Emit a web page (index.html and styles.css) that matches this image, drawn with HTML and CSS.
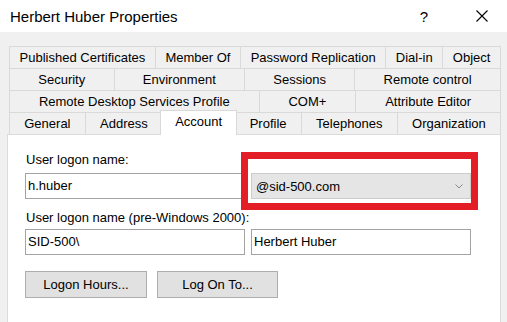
FILE: index.html
```html
<!DOCTYPE html>
<html lang="en">
  <head>
    <meta charset="UTF-8" />
    <meta name="viewport" content="width=device-width, initial-scale=1.0" />
    <title>Herbert Huber Properties</title>
    <link rel="stylesheet" href="styles.css">
  </head>
  <body>
    <div class="titlebar">
      <span class="title">Herbert Huber Properties</span>
      <span class="help">?</span>
      <span class="close">
        <svg viewBox="0 0 12 12" width="12" height="12">
          <path d="M0.5 0.5 11.5 11.5M11.5 0.5 0.5 11.5" stroke="#000" stroke-width="1.1" fill="none" />
        </svg>
      </span>
    </div>

    <div class="dialog">
      <div class="tabs">
        <div class="tab-row">
          <div class="tab">Published Certificates</div>
          <div class="tab">Member Of</div>
          <div class="tab">Password Replication</div>
          <div class="tab">Dial-in</div>
          <div class="tab">Object</div>
        </div>
        <div class="tab-row">
          <div class="tab">Security</div>
          <div class="tab">Environment</div>
          <div class="tab">Sessions</div>
          <div class="tab">Remote control</div>
        </div>
        <div class="tab-row">
          <div class="tab">Remote Desktop Services Profile</div>
          <div class="tab">COM+</div>
          <div class="tab">Attribute Editor</div>
        </div>
        <div class="tab-row">
          <div class="tab">General</div>
          <div class="tab">Address</div>
          <div class="tab active">Account</div>
          <div class="tab">Profile</div>
          <div class="tab">Telephones</div>
          <div class="tab">Organization</div>
        </div>
      </div>

      <div class="panel">
        <div class="label first">User logon name:</div>
        <div class="field-row">
          <div class="input">h.huber</div>
          <div class="combo">
            <span>@sid-500.com</span>
            <svg class="chevron" viewBox="0 0 8 5" width="8" height="5">
              <path d="M0.5 0.5 4 4 7.5 0.5" stroke="#8a8a8a" stroke-width="1" fill="none" />
            </svg>
          </div>
        </div>

        <div class="label second">User logon name (pre-Windows 2000):</div>
        <div class="field-row">
          <div class="input">SID-500\</div>
          <div class="input">Herbert Huber</div>
        </div>

        <div class="buttons">
          <div class="button logon-hours">Logon Hours...</div>
          <div class="button log-on-to">Log On To...</div>
        </div>

        <div class="highlight"></div>
      </div>
    </div>
  </body>
</html>
```

FILE: styles.css
```css
* {
  margin: 0;
  padding: 0;
  box-sizing: border-box;
}
body {
  width: 507px;
  height: 322px;
  overflow: hidden;
  background-color: #f0f0f0;
  color: #000;
  font: 13px "Liberation Sans", Arial, sans-serif;
}

.titlebar {
  height: 32px;
  background-color: #fff;
  display: flex;
  align-items: center;
}

.title {
  padding-left: 10px;
  font-size: 15px;
}

.help {
  margin-left: auto;
  width: 10px;
  font-size: 15px;
  text-align: center;
}

.close {
  display: flex;
  margin-left: 47px;
  margin-right: 19px;
}

.dialog {
  padding: 14px 6px 0 7px;
}

.tabs {
  margin-left: 2px;
}

.tab-row {
  display: flex;
  height: 22px;
}

.tab {
  flex: 1 1 auto;
  height: 22px;
  padding: 0 6px;
  line-height: 21px;
  text-align: center;
  white-space: nowrap;
  border-top: 1px solid #d9d9d9;
  border-left: 1px solid #d9d9d9;
}

.tab:last-child {
  border-right: 1px solid #d9d9d9;
}

.active {
  position: relative;
  z-index: 2;
  align-self: flex-start;
  height: 25px;
  margin: -2px -2px 0;
  background-color: #fff;
  border-right: 1px solid #d9d9d9;
}

.active + .tab {
  border-left: none;
}

.panel {
  position: relative;
  height: 188px;
  padding: 17px 0 0 17px;
  background-color: #fff;
  border: 1px solid #dcdcdc;
  border-bottom: none;
}

.label {
  height: 16px;
  line-height: 16px;
  padding-left: 1px;
}

.first {
  margin-bottom: 5px;
}

.second {
  margin-top: 11px;
  margin-bottom: 3px;
}

.field-row {
  display: grid;
  grid-template-columns: 220px 220px;
  column-gap: 6px;
}

.input {
  height: 26px;
  padding: 0 2px;
  line-height: 24px;
  border: 1px solid #a3a3a3;
  background-color: #fff;
}

.combo {
  display: flex;
  align-items: center;
  justify-content: space-between;
  height: 26px;
  padding: 0 7px 0 4px;
  background-color: #e5e5e5;
  border: 1px solid #cccccc;
}

.chevron {
  margin-top: 1px;
}

.buttons {
  display: flex;
  gap: 10px;
  margin-top: 16px;
}

.button {
  height: 27px;
  line-height: 25px;
  text-align: center;
  background-color: #e1e1e1;
  border: 1px solid #adadad;
}

.logon-hours {
  width: 122px;
}

.log-on-to {
  width: 121px;
}

.highlight {
  position: absolute;
  left: 233px;
  top: 17px;
  width: 237px;
  height: 58px;
  border: 7px solid #e31e27;
}
```
